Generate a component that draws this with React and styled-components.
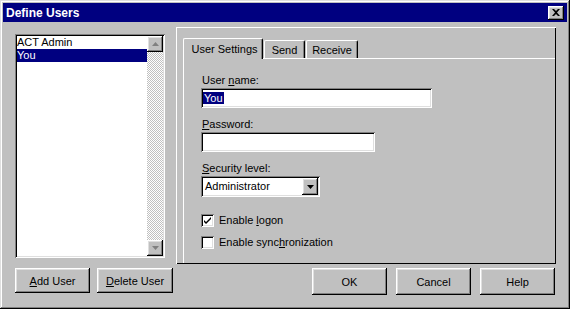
import styled, { createGlobalStyle } from "styled-components";

const Global = createGlobalStyle`
  html, body { margin: 0; padding: 0; background: #c0c0c0; }
  body { font-family: "Liberation Sans", Arial, sans-serif; font-size: 11px; color: #000; }
  * { box-sizing: border-box; }
`;

const raised = `
  box-shadow: inset -1px -1px #000, inset 1px 1px #fff, inset -2px -2px #808080, inset 2px 2px #dfdfdf;
`;

const sunken = `
  box-shadow: inset 1px 1px #808080, inset -1px -1px #fff, inset 2px 2px #000, inset -2px -2px #dfdfdf;
`;

export default function App() {
  return (
    <>
      <Global />
      <Window>
        <TitleBar>
          <Title>Define Users</Title>
          <CloseButton>
            <svg width="8" height="7" viewBox="0 0 8 7">
              <path d="M0 0h2l2 2 2-2h2L5 3.5 8 7H6L4 5 2 7H0l3-3.5z" fill="#000" />
            </svg>
          </CloseButton>
        </TitleBar>

        <Body>
          <LeftColumn>
            <ListBox>
              <ListItems>
                <ListItem>ACT Admin</ListItem>
                <ListItem selected>You</ListItem>
              </ListItems>
              <ScrollBar>
                <ScrollArrow>
                  <svg width="7" height="4" viewBox="0 0 7 4"><path d="M3.5 0 7 4H0z" fill="#808080" /></svg>
                </ScrollArrow>
                <Track />
                <ScrollArrow>
                  <svg width="7" height="4" viewBox="0 0 7 4"><path d="M0 0h7L3.5 4z" fill="#808080" /></svg>
                </ScrollArrow>
              </ScrollBar>
            </ListBox>
            <ButtonRow>
              <Button width={75}><span><u>A</u>dd User</span></Button>
              <Button width={76}><span><u>D</u>elete User</span></Button>
            </ButtonRow>
          </LeftColumn>

          <RightColumn>
            <Panel>
              <Tabs>
                <Tab active width={80}>User Settings</Tab>
                <Tab width={41}>Send</Tab>
                <Tab width={52}>Receive</Tab>
              </Tabs>
              <TabPage>
                <Label>User <u>n</u>ame:</Label>
                <TextBox width={231}><Selected>You</Selected></TextBox>
                <Label><u>P</u>assword:</Label>
                <TextBox width={174} />
                <Label><u>S</u>ecurity level:</Label>
                <Select>
                  <SelectText>Administrator</SelectText>
                  <DropButton>
                    <svg width="7" height="4" viewBox="0 0 7 4"><path d="M0 0h7L3.5 4z" fill="#000" /></svg>
                  </DropButton>
                </Select>
                <Checks>
                  <CheckRow>
                    <CheckBox>
                      <svg width="9" height="9" viewBox="0 0 9 9">
                        <path d="M1 4l2 2 5-5v2L3 8 1 6z" fill="#000" />
                      </svg>
                    </CheckBox>
                    <span>Enable <u>l</u>ogon</span>
                  </CheckRow>
                  <CheckRow>
                    <CheckBox />
                    <span>Enable sync<u>h</u>ronization</span>
                  </CheckRow>
                </Checks>
              </TabPage>
            </Panel>
            <ButtonRow right>
              <Button width={75} tall>OK</Button>
              <Button width={75} tall>Cancel</Button>
              <Button width={75} tall>Help</Button>
            </ButtonRow>
          </RightColumn>
        </Body>
      </Window>
    </>
  );
}

const Window = styled.div`
  width: 570px;
  height: 309px;
  padding: 3px;
  background: #c0c0c0;
  box-shadow: inset -1px -1px #000, inset 1px 1px #dfdfdf, inset -2px -2px #808080, inset 2px 2px #fff;
  display: flex;
  flex-direction: column;
`;

const TitleBar = styled.div`
  height: 19px;
  background: #000080;
  display: flex;
  align-items: center;
  justify-content: space-between;
  padding: 0 3px 0 3px;
`;

const Title = styled.span`
  color: #fff;
  font-weight: bold;
  font-size: 12px;
`;

const CloseButton = styled.div`
  width: 16px;
  height: 14px;
  background: #c0c0c0;
  ${raised}
  display: flex;
  align-items: center;
  justify-content: center;
`;

const Body = styled.div`
  flex: 1;
  display: flex;
  gap: 3px;
  padding: 5px 11px 0 12px;
`;

const LeftColumn = styled.div`
  width: 158px;
  padding-top: 7px;
  display: flex;
  flex-direction: column;
  gap: 10px;
`;

const ListBox = styled.div`
  width: 150px;
  height: 224px;
  background: #fff;
  ${sunken}
  padding: 2px;
  display: flex;
`;

const ListItems = styled.div`
  flex: 1;
`;

const ListItem = styled.div`
  height: 13px;
  line-height: 13px;
  padding-left: 0;
  background: ${(p) => (p.selected ? "#000080" : "transparent")};
  color: ${(p) => (p.selected ? "#fff" : "#000")};
`;

const ScrollBar = styled.div`
  width: 16px;
  display: flex;
  flex-direction: column;
`;

const ScrollArrow = styled.div`
  height: 16px;
  background: #c0c0c0;
  ${raised}
  display: flex;
  align-items: center;
  justify-content: center;
`;

const Track = styled.div`
  flex: 1;
  background: repeating-conic-gradient(#c0c0c0 0 25%, #fff 0 50%) 0 0 / 2px 2px;
`;

const ButtonRow = styled.div`
  display: flex;
  gap: ${(p) => (p.right ? "9px" : "7px")};
  justify-content: ${(p) => (p.right ? "flex-end" : "flex-start")};
  padding-right: ${(p) => (p.right ? "1px" : "0")};
`;

const Button = styled.div`
  width: ${(p) => p.width}px;
  height: ${(p) => (p.tall ? 27 : 25)}px;
  background: #c0c0c0;
  ${raised}
  display: flex;
  align-items: center;
  justify-content: center;
`;

const RightColumn = styled.div`
  flex: 1;
  display: flex;
  flex-direction: column;
  gap: 4px;
`;

const Panel = styled.div`
  height: 237px;
  box-shadow: inset 1px 1px #fff, inset -1px -1px #000;
  padding: 10px 1px 1px 7px;
  display: flex;
  flex-direction: column;
`;

const Tabs = styled.div`
  display: flex;
  align-items: flex-end;
  gap: 1px;
  height: 21px;
  position: relative;
  z-index: 1;
`;

const Tab = styled.div`
  width: ${(p) => p.width}px;
  height: ${(p) => (p.active ? 21 : 18)}px;
  background: #c0c0c0;
  border-top: 1px solid #fff;
  border-left: 1px solid #fff;
  border-right: 1px solid #000;
  border-radius: 2px 2px 0 0;
  box-shadow: inset -1px 0 #808080;
  display: flex;
  align-items: center;
  justify-content: center;
  white-space: nowrap;
  padding-left: ${(p) => (p.active ? "3px" : "0")};
  margin-bottom: ${(p) => (p.active ? "-1px" : "0")};
`;

const TabPage = styled.div`
  flex: 1;
  border-top: 1px solid #fff;
  border-left: 1px solid #fff;
  padding: 14px 0 0 17px;
  display: flex;
  flex-direction: column;
  align-items: flex-start;
`;

const Label = styled.div`
  line-height: 14px;
  padding-left: 1px;
  margin-bottom: 1px;
`;

const TextBox = styled.div`
  width: ${(p) => p.width}px;
  height: 20px;
  background: #fff;
  ${sunken}
  padding: 3px 2px 0 2px;
  margin-bottom: 9px;
  line-height: 14px;
`;

const Selected = styled.span`
  background: #000080;
  color: #fff;
  padding: 0 1px;
`;

const Select = styled.div`
  width: 119px;
  height: 21px;
  background: #fff;
  ${sunken}
  padding: 2px;
  display: flex;
  align-items: stretch;
`;

const SelectText = styled.div`
  flex: 1;
  padding: 2px 0 0 2px;
`;

const DropButton = styled.div`
  width: 16px;
  background: #c0c0c0;
  ${raised}
  display: flex;
  align-items: center;
  justify-content: center;
`;

const Checks = styled.div`
  margin-top: 16px;
  display: flex;
  flex-direction: column;
  gap: 8px;
`;

const CheckRow = styled.div`
  display: flex;
  align-items: center;
  gap: 5px;
  line-height: 14px;
`;

const CheckBox = styled.div`
  width: 13px;
  height: 13px;
  background: #fff;
  ${sunken}
  display: flex;
  align-items: center;
  justify-content: center;
`;
